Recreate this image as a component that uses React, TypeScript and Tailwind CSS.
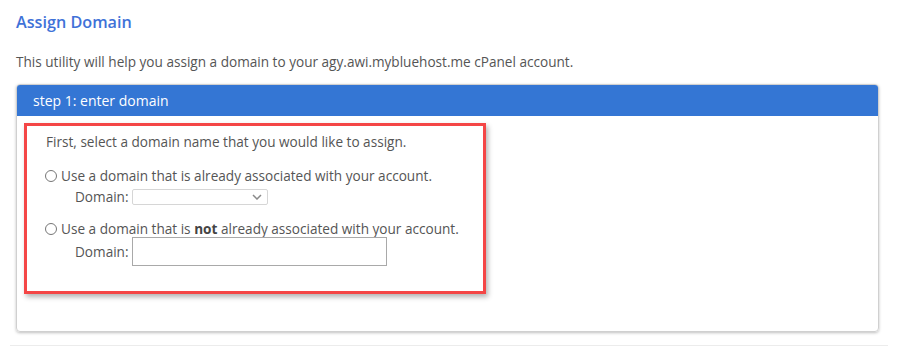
import React from "react";

function Radio() {
  return <span className="inline-block w-[12px] h-[12px] rounded-full border border-[#767676] bg-white -ml-[1px] mr-[4px] shrink-0" />;
}

export default function App() {
  return (
    <div
      className="w-[898px] h-[346px] bg-white overflow-hidden text-[#555555]"
      style={{ fontFamily: '"Open Sans", "Noto Sans", sans-serif' }}
    >
      <div className="px-[16px] pt-[11px]">
        <h1 className="text-[16.2px] leading-[22px] font-semibold text-[#3f72d8]">Assign Domain</h1>
        <p className="mt-[20px] text-[13.6px] leading-[18px]">
          This utility will help you assign a domain to your agy.awi.mybluehost.me cPanel account.
        </p>
      </div>
      <div className="ml-[16px] mr-[19px] mt-[13px] h-[248px] rounded-[4px] border border-[#d0d0d0] shadow-[0_1px_3px_rgba(0,0,0,0.25)] overflow-hidden flex flex-col">
        <div className="h-[31px] bg-[#3476d4] text-white text-[14px] leading-[31px] pl-[16px]">step 1: enter domain</div>
        <div className="pt-[7px] pl-[7px]">
          <div className="w-[462px] h-[171px] border-[3px] border-[#f44646] shadow-[2px_3px_5px_rgba(0,0,0,0.3)] pl-[19px] pt-[7px] text-[13.6px] leading-[18px]">
            <p>First, select a domain name that you would like to assign.</p>
            <div className="mt-[16px] flex items-center">
              <Radio />
              <span>Use a domain that is already associated with your account.</span>
            </div>
            <div className="flex items-center pl-[29px] mt-[3px]">
              <span className="mr-[3px]">Domain:</span>
              <div className="w-[136px] h-[16px] border border-[#d6d6d6] rounded-[2px] flex items-center justify-end pr-[5px]">
                <svg width="10" height="6" viewBox="0 0 10 6" fill="none">
                  <path d="M1 1l4 4 4-4" stroke="#8a8a8a" strokeWidth="1.5" />
                </svg>
              </div>
            </div>
            <div className="mt-[14px] flex items-center">
              <Radio />
              <span>
                Use a domain that is <b className="font-bold text-[#444]">not</b> already associated with your account.
              </span>
            </div>
            <div className="flex items-center pl-[29px] -mt-[1px]">
              <span className="mr-[3px]">Domain:</span>
              <div className="w-[255px] h-[29px] border border-[#a9a9a9]" />
            </div>
          </div>
        </div>
      </div>
      <div className="mx-[10px] mt-[13px] h-px bg-[#ececec]" />
    </div>
  );
}
